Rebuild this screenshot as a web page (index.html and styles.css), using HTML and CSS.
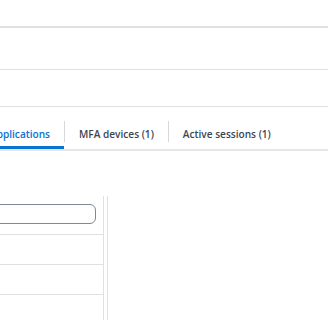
FILE: index.html
```html
<!DOCTYPE html>
<html lang="en">
<head>
  <meta charset="UTF-8">
  <meta name="viewport" content="width=device-width, initial-scale=1.0">
  <title>User details</title>
  <link rel="stylesheet" href="styles.css">
</head>
<body>
  <div class="page">
    <!-- Cabecera y secciones -->
    <div class="block block-top"></div>
    <div class="block block-mid"></div>
    <div class="block block-low"></div>

    <!-- Pestañas -->
    <nav class="tabs">
      <a href="#" class="tab active">Applications</a>
      <span class="tab-sep"></span>
      <a href="#" class="tab">MFA devices (1)</a>
      <span class="tab-sep"></span>
      <a href="#" class="tab">Active sessions (1)</a>
    </nav>

    <!-- Panel izquierdo -->
    <div class="content">
      <div class="side">
        <div class="search-row">
          <input type="text" class="search" aria-label="Search">
        </div>
        <div class="row"></div>
        <div class="row"></div>
      </div>
    </div>
  </div>
</body>
</html>
```

FILE: styles.css
```css
:root {
  --line: #e0e0e0;
  --text: #3b4654;
  --blue: #0972d3;
}

* {
  margin: 0;
  padding: 0;
  box-sizing: border-box;
}

body, html {
  height: 100%;
  overflow: hidden;
  background: #ffffff;
  font-family: 'Open Sans', 'Noto Sans', sans-serif;
}

.page {
  width: 100%;
}

/* Secciones superiores */
.block {
  border-bottom: 1px solid var(--line);
}

.block-top {
  height: 28px;
  border-bottom-width: 2px;
}

.block-mid {
  height: 42px;
}

.block-low {
  height: 37px;
}

/* Pestañas */
.tabs {
  display: flex;
  align-items: center;
  height: 44px;
  border-bottom: 2px solid #e4e6e8;
  margin-left: -24px;
  white-space: nowrap;
}

.tab {
  display: flex;
  align-items: center;
  flex-shrink: 0;
  height: 100%;
  padding: 15px 14px 0;
  text-decoration: none;
  color: var(--text);
  font-size: 10.1px;
  font-weight: 600;
  border-bottom: 3px solid transparent;
}

.tab.active {
  color: var(--blue);
  border-bottom-color: var(--blue);
}

.tab-sep {
  flex-shrink: 0;
  width: 1px;
  height: 21px;
  margin-top: 7px;
  background: #d5d9dd;
}

/* Contenido */
.content {
  display: flex;
  padding-top: 45px;
}

.side {
  width: 108px;
  height: 130px;
  border-right: 1px solid var(--line);
  position: relative;
}

.side::after {
  content: '';
  position: absolute;
  top: 0;
  bottom: 0;
  right: 3px;
  width: 1px;
  background: var(--line);
}

.search-row {
  padding: 8px 0 10px;
  margin-right: 4px;
  border-bottom: 1px solid var(--line);
}

.search {
  display: block;
  width: 116px;
  height: 20px;
  margin-left: -20px;
  border: 1px solid #7d8998;
  border-radius: 6px;
  background: #fff;
}

.row {
  height: 30px;
  margin-right: 4px;
  border-bottom: 1px solid var(--line);
}
```
